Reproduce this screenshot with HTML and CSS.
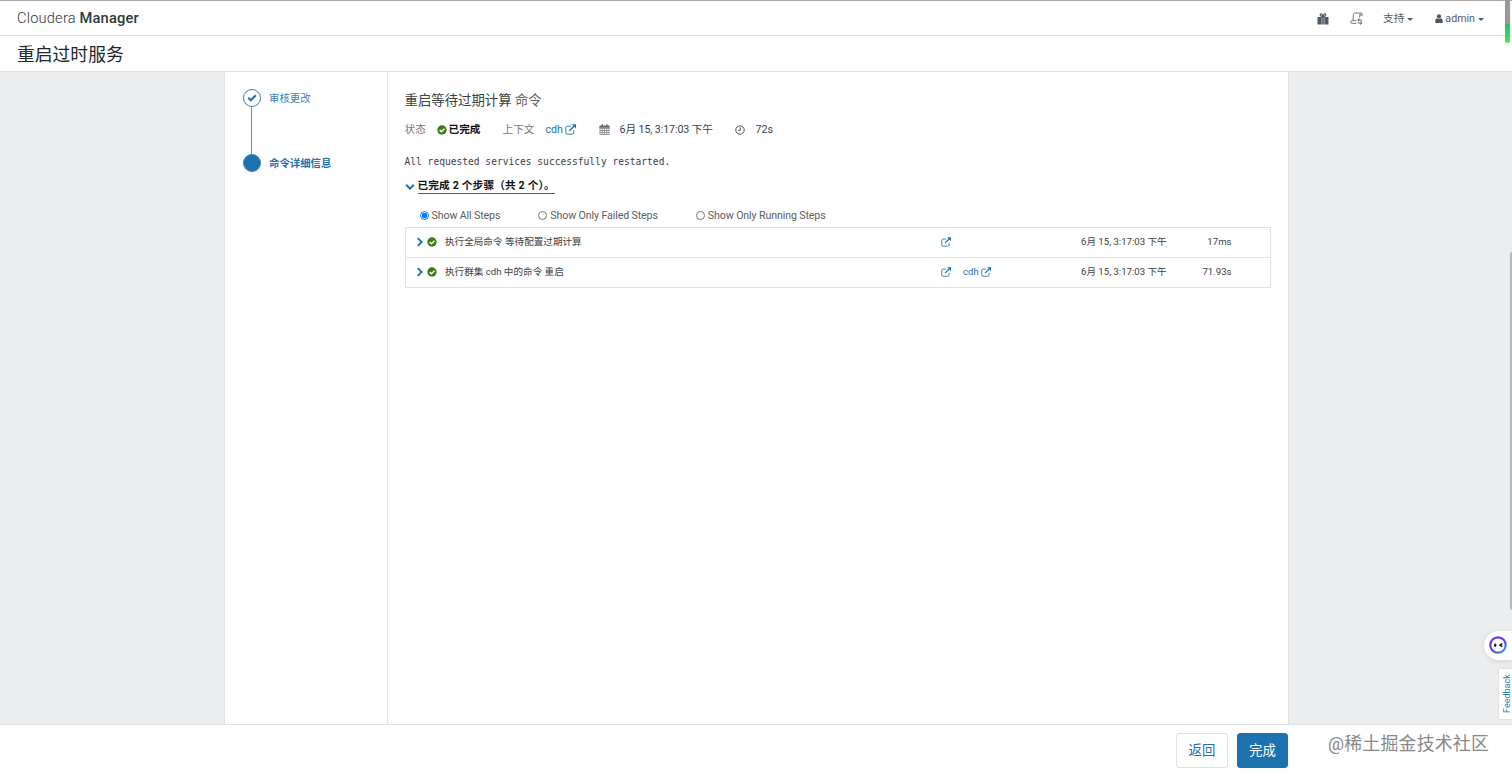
FILE: index.html
```html
<!DOCTYPE html>
<html lang="zh-CN">
<head>
    <meta charset="UTF-8">
    <title>重启过时服务 - Cloudera Manager</title>
    <link rel="stylesheet" href="styles.css">
</head>
<body>
    <svg class="sprite" width="0" height="0">
        <symbol id="check-circle" viewBox="0 0 12 12">
            <circle cx="6" cy="6" r="5.6" fill="#3b7e10"/>
            <path d="M3.2 6.1l2.1 2.1 3.7-3.8" fill="none" stroke="#fff" stroke-width="1.7"/>
        </symbol>
        <symbol id="external" viewBox="0 0 12 12">
            <path d="M6.3 2.4H2.4C1.5 2.4.9 3 .9 3.9v5.7c0 .9.6 1.5 1.5 1.5h5.7c.9 0 1.5-.6 1.5-1.5V7" fill="none" stroke="currentColor" stroke-width="1"/>
            <path d="M4.8 7.4l5-5" fill="none" stroke="currentColor" stroke-width="1.5"/>
            <path d="M7.3.3H12V5z" fill="currentColor"/>
        </symbol>
        <symbol id="chevron" viewBox="0 0 8 10">
            <path d="M1.8 1.2L5.6 5 1.8 8.8" fill="none" stroke="currentColor" stroke-width="1.9"/>
        </symbol>
    </svg>

    <header>
        <div class="brand">Cloudera <b>Manager</b></div>
        <div class="top-menu">
            <svg class="icon-gift" viewBox="0 0 12 12">
                <path d="M.5 4h4.2v7.5H.5zM7.3 4h4.2v7.5H7.3zM5.2 3.4h1.6v8.1H5.2z" fill="#4f5864"/>
                <path d="M5.7 3.6C3.2 3.6 2.4.9 4 .9c1.1 0 1.6 1.2 2 2.5C6.4 2.1 6.9.9 8 .9c1.6 0 .8 2.7-1.7 2.7" fill="none" stroke="#4f5864" stroke-width="1.1"/>
            </svg>
            <svg class="icon-scroll" viewBox="0 0 12 12">
                <path d="M5.8 10.5H2C.4 10.5.3 8.3 1.2 8h1.500L3.200 2.500C3.300 1.500 3.600 1 4.400 1h5.700c-.8.4-1 .9-1 1.800l-.2 2.200M10.100 1c1 0 1.500.6 1.300 1.900H9.200M2.700 8h3.200" fill="none" stroke="#6b727b" stroke-width=".9"/>
                <path d="M7.2 7.3L8.6 6.1M7.2 7.3L8.6 8.5M7.4 7.3h2a1.500 1.500 0 0 1 1.600 1.500M10.800 10.300L9.400 9.100M10.800 10.300L9.400 11.500M10.600 10.300h-2a1.500 1.500 0 0 1-1.500-1" fill="none" stroke="#4f5864" stroke-width=".9"/>
            </svg>
            <span class="menu-item support">支持<i class="caret"></i></span>
            <span class="menu-item">
                <svg class="icon-user" viewBox="0 0 9 10"><circle cx="4.5" cy="2.6" r="2.4"/><path d="M.3 10V7.7C.3 6 1.2 5 2.5 4.7c1.200.9 2.800.9 4 0C7.800 5 8.700 6 8.700 7.700V10z"/></svg>admin<i class="caret"></i>
            </span>
        </div>
    </header>

    <h1>重启过时服务</h1>

    <main>
        <div class="wizard">
            <ul class="steps">
                <li>
                    <span class="dot"><svg viewBox="0 0 12 12"><path d="M1.5 5.8l3 3L10.5 2.8" fill="none" stroke="#1c72af" stroke-width="2.5"/></svg></span>
                    <span class="step-name">审核更改</span>
                </li>
                <li class="active">
                    <span class="dot"></span>
                    <span class="step-name">命令详细信息</span>
                </li>
            </ul>
            <section class="content">
                <h2>重启等待过期计算 <small>命令</small></h2>
                <div class="status">
                    <span class="label">状态</span>
                    <svg class="ok"><use href="#check-circle"/></svg>
                    <b>已完成</b>
                    <span class="label context">上下文</span>
                    <a href="#">cdh<svg class="ext"><use href="#external"/></svg></a>
                    <svg class="calendar" viewBox="0 0 11 11">
                        <path d="M.9 2h9.2v8.5H.9zM.9 4.5h9.2M.9 6.5h9.2M.9 8.5h9.2M3.2 4.5v6M5.5 4.5v6M7.8 4.5v6" fill="none" stroke="#777" stroke-width=".7"/>
                        <path d="M.6 1.7h9.8v2H.6zM2.5.2h1.4v2.5H2.5zM7.1.2h1.4v2.5H7.1z" fill="#666"/>
                    </svg>
                    <span class="date">6月 15, 3:17:03 下午</span>
                    <svg class="clock" viewBox="0 0 10 10"><circle cx="5" cy="5" r="4.2"/><path d="M5.3 2.3V5.4H3.2"/></svg>
                    <span>72s</span>
                </div>
                <pre>All requested services successfully restarted.</pre>
                <div class="summary">
                    <svg viewBox="0 0 10 8"><path d="M1.2 1.8L5 5.6l3.8-3.8" fill="none" stroke="#1c72af" stroke-width="2"/></svg>
                    <span>已完成 2 个步骤（共 2 个）。</span>
                </div>
                <div class="filters">
                    <label><input type="radio" name="filter" checked>Show All Steps</label>
                    <label><input type="radio" name="filter">Show Only Failed Steps</label>
                    <label><input type="radio" name="filter">Show Only Running Steps</label>
                </div>
                <div class="commands">
                    <div class="row">
                        <svg class="arrow"><use href="#chevron"/></svg>
                        <svg class="ok"><use href="#check-circle"/></svg>
                        <span class="name">执行全局命令 等待配置过期计算</span>
                        <a href="#"><svg class="ext"><use href="#external"/></svg></a>
                        <a href="#"></a>
                        <span>6月 15, 3:17:03 下午</span>
                        <span class="time">17ms</span>
                    </div>
                    <div class="row">
                        <svg class="arrow"><use href="#chevron"/></svg>
                        <svg class="ok"><use href="#check-circle"/></svg>
                        <span class="name">执行群集 cdh 中的命令 重启</span>
                        <a href="#"><svg class="ext"><use href="#external"/></svg></a>
                        <a href="#">cdh<svg class="ext"><use href="#external"/></svg></a>
                        <span>6月 15, 3:17:03 下午</span>
                        <span class="time">71.93s</span>
                    </div>
                </div>
            </section>
        </div>
    </main>

    <footer>
        <button>返回</button>
        <button class="primary">完成</button>
        <span class="watermark">@稀土掘金技术社区</span>
    </footer>

    <div class="meter"></div>
    <div class="scrollbar"></div>
    <div class="assistant">
        <svg viewBox="0 0 18 18">
            <defs><linearGradient id="ring" x1="0" y1="0" x2="1" y2="1"><stop offset="0" stop-color="#8b2be8"/><stop offset=".5" stop-color="#5540e0"/><stop offset="1" stop-color="#35a8ee"/></linearGradient></defs>
            <circle cx="9" cy="9" r="7.7" fill="#fff" stroke="url(#ring)" stroke-width="2.2"/>
            <ellipse cx="6.2" cy="9.2" rx="1.2" ry="1.8" fill="#111"/>
            <path d="M13.3 7.7L11 9.2l2.3 1.5" fill="none" stroke="#111" stroke-width="1.4"/>
        </svg>
    </div>
    <div class="feedback">Feedback</div>
</body>
</html>
```
FILE: styles.css
```css
* {
    box-sizing: border-box;
}
body {
    margin: 0;
    height: 776px;
    display: flex;
    flex-direction: column;
    overflow: hidden;
    position: relative;
    font-family: Roboto, "Noto Sans CJK SC", sans-serif;
    font-size: 10.67px;
    line-height: 16px;
    color: #3c4045;
    background: #fff;
}
svg {
    display: block;
    flex: none;
}
.sprite {
    position: absolute;
}
a {
    color: #1c72af;
    text-decoration: none;
}
header {
    flex: none;
    height: 36px;
    padding: 0 28px 0 17px;
    border-top: 1px solid #a9a9a9;
    border-bottom: 1px solid #dfe2e4;
    display: flex;
    align-items: center;
    justify-content: space-between;
}
.brand {
    font-size: 14.67px;
    font-weight: 300;
    letter-spacing: 0.18px;
    color: #30373f;
}
.brand b {
    font-weight: 500;
}
.top-menu {
    display: flex;
    align-items: center;
    padding-top: 1px;
    color: #555c65;
}
.icon-gift {
    width: 12px;
    height: 12px;
    margin-right: 21px;
}
.icon-scroll {
    width: 13px;
    height: 13px;
    margin-right: 20px;
}
.menu-item {
    display: flex;
    align-items: center;
    padding-top: 1px;
}
.support {
    margin-right: 22px;
}
.icon-user {
    width: 8px;
    height: 9px;
    margin: 0 2px 2px 0;
    fill: #4f5864;
}
.caret {
    margin-left: 3px;
    border: 3px solid transparent;
    border-top-color: #4f5864;
    border-bottom: 0;
}
h1 {
    flex: none;
    margin: 0;
    height: 36px;
    padding-left: 17px;
    border-bottom: 1px solid #dfe2e4;
    font-size: 17.8px;
    font-weight: 400;
    line-height: 37px;
    color: #20262d;
}
main {
    flex: 1;
    min-height: 0;
    background: #ecedef;
    display: flex;
    justify-content: center;
}
.wizard {
    width: 1065px;
    border: 1px solid #dfe2e4;
    border-width: 0 1px;
    background: #fff;
    display: flex;
}
.steps {
    list-style: none;
    margin: 0;
    padding: 17px 0 0 18px;
    width: 163px;
    border-right: 1px solid #dfe2e4;
    color: #3c83b8;
    font-size: 10.4px;
}
.steps li {
    display: flex;
    align-items: center;
    height: 18px;
    position: relative;
}
.step-name {
    padding-top: 2px;
}
.steps .active {
    margin-top: 47px;
    font-weight: bold;
    color: #1c72af;
}
.steps .active::before {
    content: "";
    position: absolute;
    left: 8px;
    bottom: 18px;
    height: 47px;
    border-left: 1px solid #5d96bd;
}
.dot {
    width: 18px;
    height: 18px;
    margin-right: 8.5px;
    border: 1px solid #3f82b0;
    border-radius: 50%;
    display: flex;
    align-items: center;
    justify-content: center;
}
.dot svg {
    width: 10px;
    height: 10px;
}
.active .dot {
    background: #1c72af;
}
.content {
    flex: 1;
    padding: 19px 17px 0;
}
h2 {
    margin: 0;
    font-size: 13.4px;
    font-weight: 400;
    line-height: 20px;
}
h2 small {
    font-size: inherit;
    color: #666;
}
.status {
    display: flex;
    align-items: center;
    height: 18px;
    margin-top: 10px;
}
.status svg {
    margin-bottom: 1px;
}
.label {
    width: 32px;
    color: #777;
}
.ok {
    width: 10px;
    height: 10px;
}
.status b {
    margin-left: 2px;
    color: #111;
    width: 54px;
}
.context {
    width: 43px;
}
.status a {
    display: flex;
    align-items: center;
    width: 53px;
}
.ext {
    width: 11px;
    height: 11px;
    margin-left: 2px;
}
.calendar {
    width: 11px;
    height: 11px;
    margin-right: 10px;
}
.date {
    width: 115px;
    letter-spacing: -0.1px;
}
.clock {
    width: 10px;
    height: 10px;
    margin-right: 11px;
    fill: none;
    stroke: #555;
}
pre {
    margin: 15px 0 0;
    font-family: "DejaVu Sans Mono", monospace;
    font-size: 9.6px;
    line-height: 16px;
}
.summary {
    display: flex;
    align-items: center;
    height: 16px;
    margin-top: 8px;
    color: #111;
    font-weight: bold;
}
.summary svg {
    width: 10px;
    height: 8px;
    margin: 1px 3px 0 0;
}
.summary span {
    height: 15px;
    line-height: 14px;
    letter-spacing: 0.15px;
    border-bottom: 1px solid #3b7e10;
}
.filters {
    display: flex;
    gap: 38px;
    margin-top: 13px;
    padding-left: 15px;
    letter-spacing: -0.13px;
    color: #5a5d61;
}
.filters label {
    display: flex;
    align-items: center;
    height: 18px;
}
.filters input {
    width: 9px;
    height: 9px;
    margin: 0 3px 2px 0;
}
.commands {
    margin-top: 2px;
    border: 1px solid #dfe2e4;
    font-size: 9.6px;
}
.row {
    display: grid;
    grid-template-columns: 11px 18px 494px 24px 118px 100px 1fr;
    align-items: center;
    height: 29px;
    padding: 0 38px 2px 10.5px;
}
.row + .row {
    height: 30px;
    border-top: 1px solid #dfe2e4;
}
.row a {
    display: flex;
    align-items: center;
}
.row .ext {
    width: 10px;
    height: 10px;
}
.arrow {
    width: 8px;
    height: 10px;
    color: #1c72af;
}
.time {
    text-align: right;
}
footer {
    flex: none;
    height: 52px;
    padding: 8px 22px 0 0;
    border-top: 1px solid #dfe2e4;
    display: flex;
    justify-content: flex-end;
}
button {
    width: 52px;
    height: 35px;
    margin-right: 9px;
    padding: 0 0 3px;
    border: 1px solid #dfe2e4;
    border-radius: 3px;
    background: #fff;
    color: #1c72af;
    font: 13.4px Roboto, "Noto Sans CJK SC", sans-serif;
}
button.primary {
    width: 51px;
    margin-right: 40px;
    border-color: #1c72af;
    background: #1c72af;
    color: #fff;
}
.watermark {
    width: 162px;
    font-size: 17.9px;
    line-height: 22px;
    letter-spacing: 0.2px;
    color: #888;
    white-space: nowrap;
}
.meter {
    position: absolute;
    top: 0;
    right: 2px;
    width: 5px;
    height: 43px;
    border-radius: 0 0 3px 3px;
    background: linear-gradient(#999 24px, #25c65a 24px, #4ade70);
    box-shadow: 0 3px 3px #eee;
}
.scrollbar {
    position: absolute;
    top: 252px;
    right: 0;
    width: 2px;
    height: 358px;
    border-radius: 2px 0 0 2px;
    background: #b5b7b9;
}
.assistant {
    position: absolute;
    top: 631px;
    right: 0;
    width: 28px;
    height: 29px;
    padding: 5px;
    border-radius: 15px 0 0 15px;
    background: #fff;
    box-shadow: 0 1px 5px rgba(0,0,0,0.12);
}
.assistant svg {
    width: 18px;
    height: 18px;
}
.feedback {
    position: absolute;
    top: 669px;
    right: 0;
    width: 13px;
    height: 50px;
    background: #fff;
    box-shadow: 0 0 2px rgba(0,0,0,0.15);
    writing-mode: vertical-rl;
    text-align: center;
    transform: rotate(180deg);
    font-size: 9px;
    line-height: 16px;
    color: #2b7fb8;
}
```
